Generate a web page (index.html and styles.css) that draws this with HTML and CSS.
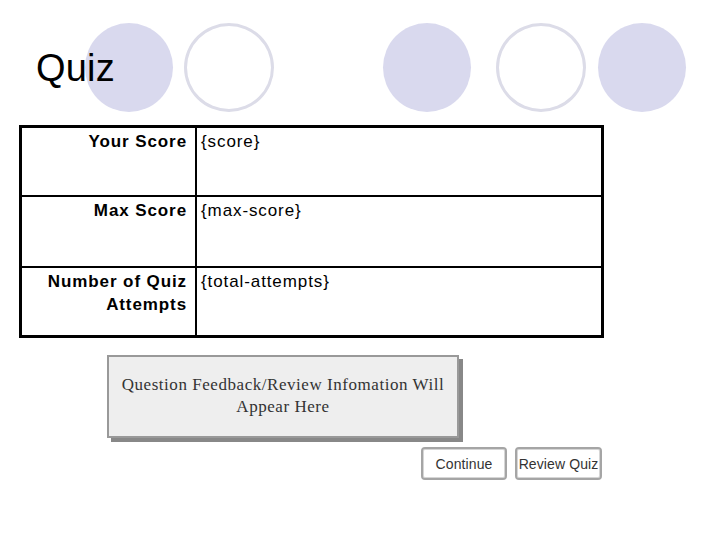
FILE: index.html
```html
<!DOCTYPE html>
<html>
<head>
<meta charset="utf-8">
<link rel="stylesheet" href="styles.css">
</head>
<body>
<div class="page">
  <header class="header">
    <div class="circles">
      <span class="circle filled c1"></span>
      <span class="circle ring c2"></span>
      <span class="circle filled c3"></span>
      <span class="circle ring c4"></span>
      <span class="circle filled c5"></span>
    </div>
    <h1 class="title">Quiz</h1>
  </header>

  <div class="score-table">
    <div class="label">Your Score</div>
    <div class="value">{score}</div>
    <div class="label">Max Score</div>
    <div class="value">{max-score}</div>
    <div class="label">Number of Quiz<br>Attempts</div>
    <div class="value">{total-attempts}</div>
  </div>

  <div class="feedback">Question Feedback/Review Infomation Will<br>Appear Here</div>

  <div class="actions">
    <button class="btn">Continue</button>
    <button class="btn">Review Quiz</button>
  </div>
</div>
</body>
</html>
```

FILE: styles.css
```css
html, body {
  margin: 0;
  padding: 0;
  background: #fff;
}

.page {
  width: 720px;
  height: 540px;
  font-family: "Liberation Sans", Arial, sans-serif;
  color: #000;
}

.header {
  position: relative;
  padding-top: 23px;
  height: 89px;
}

.circles {
  display: flex;
  padding-left: 85px;
}

.circle {
  box-sizing: border-box;
  width: 88px;
  height: 89px;
  border-radius: 50%;
  flex: none;
}

.filled {
  background: #d9d9ee;
}

.ring {
  border: 3px solid #dcdce8;
  width: 90px;
}

.c2 { margin-left: 11px; }
.c3 { margin-left: 109px; }
.c4 { margin-left: 25px; }
.c5 { margin-left: 12px; }

.title {
  position: absolute;
  left: 36px;
  top: 45px;
  margin: 0;
  font-weight: normal;
  font-size: 38px;
  line-height: 46px;
  letter-spacing: 0.2px;
}

.score-table {
  margin: 13px 0 0 19px;
  width: 585px;
  box-sizing: border-box;
  border: 3px solid #000;
  background: #000;
  display: grid;
  grid-template-columns: 173px 1fr;
  grid-template-rows: 67px 69px 67px;
  gap: 2px;
  font-size: 17px;
  line-height: 23px;
  letter-spacing: 0.9px;
}

.label {
  background: #fff;
  font-weight: bold;
  text-align: right;
  padding: 2px 8px 0 0;
}

.value {
  background: #fff;
  padding: 2px 0 0 4px;
}

.feedback {
  box-sizing: border-box;
  margin: 17px 0 0 107px;
  width: 352px;
  height: 83px;
  padding-top: 17px;
  background: #eeeeee;
  border: 2px solid #999;
  box-shadow: 4px 4px 0 #888;
  font-family: "Liberation Serif", "Times New Roman", serif;
  font-size: 17px;
  line-height: 22px;
  letter-spacing: 0.55px;
  color: #333;
  text-align: center;
}

.actions {
  display: flex;
  justify-content: flex-end;
  gap: 8px;
  width: 602px;
  margin-top: 9px;
}

.btn {
  box-sizing: border-box;
  height: 33px;
  width: 86px;
  padding: 0;
  background: #fff;
  border: 2px solid #a5a5a5;
  border-radius: 4px;
  box-shadow: inset 0 0 0 1px #d6d6d6;
  font-family: "Liberation Sans", Arial, sans-serif;
  font-size: 14px;
  letter-spacing: 0.1px;
  color: #333;
}

.btn + .btn {
  width: 87px;
}
```
